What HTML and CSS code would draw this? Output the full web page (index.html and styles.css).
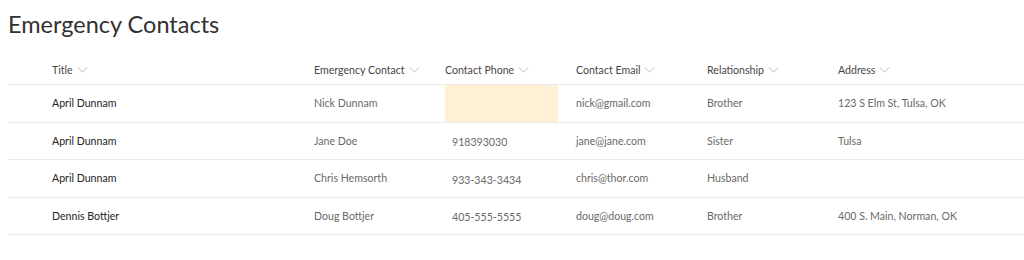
FILE: index.html
```html
<!DOCTYPE html>
<html>
<head>
<meta charset="utf-8">
<link rel="stylesheet" href="styles.css">
</head>
<body>
<h1 class="page-title">Emergency Contacts</h1>
<div class="list">
  <div class="row header">
    <div class="gutter"></div>
    <div class="hcell">Title <svg class="chev" viewBox="0 0 12 7"><path d="M0.5 0.5 L6 6 L11.5 0.5"/></svg></div>
    <div class="hcell">Emergency Contact <svg class="chev" viewBox="0 0 12 7"><path d="M0.5 0.5 L6 6 L11.5 0.5"/></svg></div>
    <div class="hcell">Contact Phone <svg class="chev" viewBox="0 0 12 7"><path d="M0.5 0.5 L6 6 L11.5 0.5"/></svg></div>
    <div class="hcell">Contact Email <svg class="chev" viewBox="0 0 12 7"><path d="M0.5 0.5 L6 6 L11.5 0.5"/></svg></div>
    <div class="hcell">Relationship <svg class="chev" viewBox="0 0 12 7"><path d="M0.5 0.5 L6 6 L11.5 0.5"/></svg></div>
    <div class="hcell">Address <svg class="chev" viewBox="0 0 12 7"><path d="M0.5 0.5 L6 6 L11.5 0.5"/></svg></div>
  </div>
  <div class="row">
    <div class="gutter"></div>
    <div class="cell title">April Dunnam</div>
    <div class="cell">Nick Dunnam</div>
    <div class="cell phone"><div class="phone-box empty"></div></div>
    <div class="cell">nick@gmail.com</div>
    <div class="cell">Brother</div>
    <div class="cell">123 S Elm St, Tulsa, OK</div>
  </div>
  <div class="row">
    <div class="gutter"></div>
    <div class="cell title">April Dunnam</div>
    <div class="cell">Jane Doe</div>
    <div class="cell phone"><div class="phone-box">918393030</div></div>
    <div class="cell">jane@jane.com</div>
    <div class="cell">Sister</div>
    <div class="cell">Tulsa</div>
  </div>
  <div class="row">
    <div class="gutter"></div>
    <div class="cell title">April Dunnam</div>
    <div class="cell">Chris Hemsorth</div>
    <div class="cell phone"><div class="phone-box">933-343-3434</div></div>
    <div class="cell">chris@thor.com</div>
    <div class="cell">Husband</div>
    <div class="cell"></div>
  </div>
  <div class="row">
    <div class="gutter"></div>
    <div class="cell title">Dennis Bottjer</div>
    <div class="cell">Doug Bottjer</div>
    <div class="cell phone"><div class="phone-box">405-555-5555</div></div>
    <div class="cell">doug@doug.com</div>
    <div class="cell">Brother</div>
    <div class="cell">400 S. Main, Norman, OK</div>
  </div>
</div>
</body>
</html>
```

FILE: styles.css
```css
* { box-sizing: border-box; }
html, body {
  margin: 0;
  padding: 0;
  background: #ffffff;
  font-family: "Lato", "Open Sans", sans-serif;
  color: #323130;
}
.page-title {
  margin: 0;
  padding: 7px 0 0 8px;
  height: 43px;
  font-size: 23.5px;
  font-weight: 400;
  line-height: 34px;
  color: #323130;
}
.list {
  margin-left: 8px;
}
.row {
  display: grid;
  grid-template-columns: 44px 262px 131px 131px 131px 131px 1fr;
  border-bottom: 1px solid #edebe9;
  height: 37.5px;
  align-items: center;
  font-size: 10.6px;
}
.row.header {
  height: 42px;
}
.hcell {
  display: flex;
  align-items: center;
  gap: 4px;
  color: #484644;
  font-size: 10.6px;
  padding-top: 12px;
}
.chev {
  width: 11px;
  height: 6px;
  fill: none;
  stroke: #b3b0ad;
  stroke-width: 1;
}
.cell {
  color: #6b6967;
  white-space: nowrap;
}
.cell.title {
  color: #252423;
}
.cell.phone {
  align-self: stretch;
  display: flex;
}
.phone-box {
  width: 113px;
  display: flex;
  align-items: center;
  padding-left: 7px;
  padding-top: 3px;
}
.phone-box.empty {
  background: #fff0d6;
}
```
